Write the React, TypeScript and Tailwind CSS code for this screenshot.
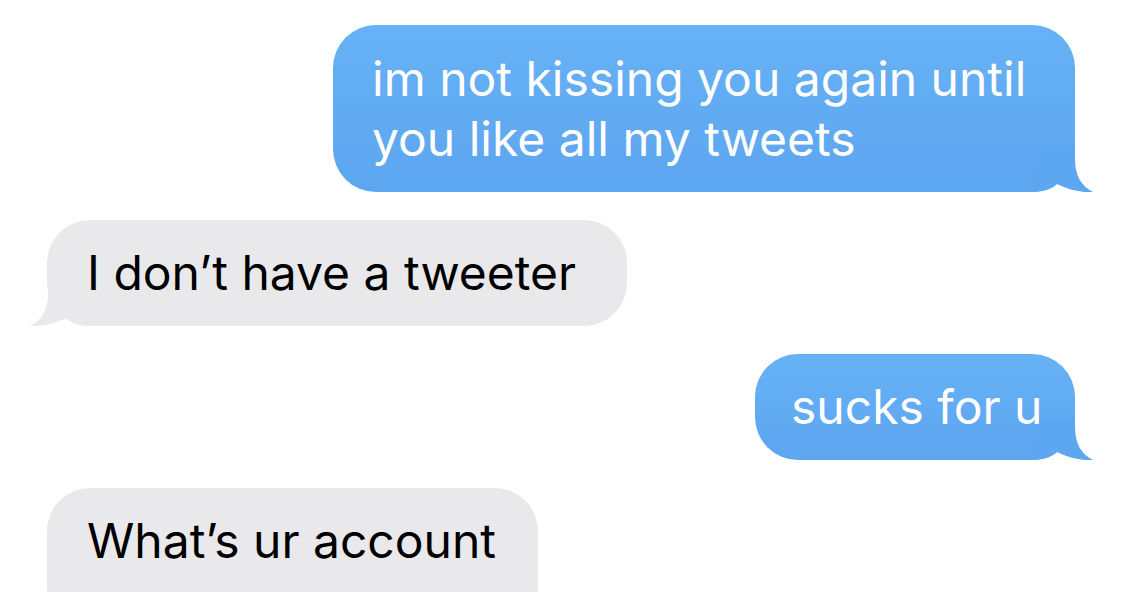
import React from "react";

const TAIL = "M0 0 H42 V8 C42 26 48 36 60 42 C50 43 36 40 24 34 C20 38 12 42 0 42 Z";

function Tail({ side, color }: { side: "left" | "right"; color: string }) {
  return (
    <svg
      width="60"
      height="42"
      viewBox="0 0 60 42"
      className={
        side === "right"
          ? "absolute bottom-0 right-[-18px]"
          : "absolute bottom-0 left-[-17px] -scale-x-100"
      }
    >
      <path d={TAIL} fill={color} />
    </svg>
  );
}

function Sent({ children, box }: { children: React.ReactNode; box: string }) {
  return (
    <div className="flex justify-end pr-[49px]">
      <div
        className={`relative ${box} rounded-[43px] bg-linear-to-b from-[#67b1f6] to-[#5da6f0] text-white`}
      >
        <Tail side="right" color="#5da6f0" />
        <div className="relative">{children}</div>
      </div>
    </div>
  );
}

function Received({ children, box }: { children: React.ReactNode; box: string }) {
  return (
    <div className="flex pl-[47px]">
      <div className={`relative ${box} pl-[40px] rounded-[43px] bg-[#e9e9eb] text-black`}>
        <Tail side="left" color="#e9e9eb" />
        <div className="relative">{children}</div>
      </div>
    </div>
  );
}

export default function App() {
  return (
    <div className="w-[1124px] h-[592px] overflow-hidden bg-white pt-[25px] font-['Inter','Liberation_Sans',sans-serif] text-[48px] leading-[60px] antialiased">
      <div className="flex flex-col gap-[28px]">
        <Sent box="w-[742px] pt-[24px] pb-[23px] pl-[39px]">
          im not kissing you again until
          <br />
          you like all my tweets
        </Sent>
        <Received box="w-[580px] py-[23px]">I don’t have a tweeter</Received>
        <Sent box="w-[320px] py-[23px] pl-[36px]">sucks for u</Sent>
        <Received box="w-[491px] pt-[23px] pb-[60px]">What’s ur account</Received>
      </div>
    </div>
  );
}
